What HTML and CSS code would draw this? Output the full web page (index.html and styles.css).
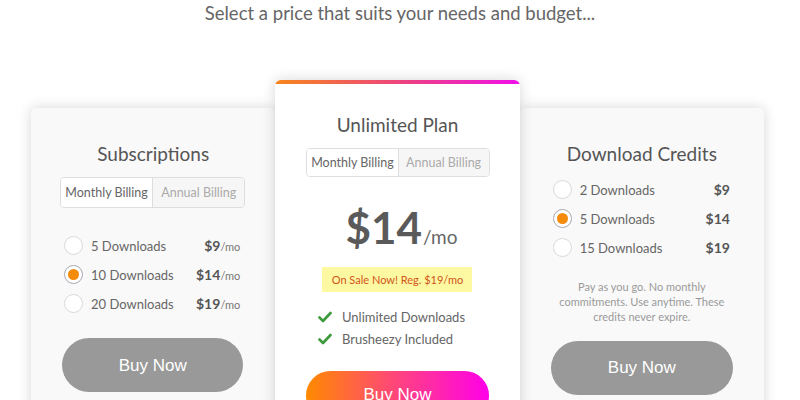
FILE: index.html
```html
<!DOCTYPE html>
<html>
<head>
<meta charset="utf-8">
<link rel="stylesheet" href="styles.css">
</head>
<body>
<h1 class="headline">Select a price that suits your needs and budget...</h1>
<div class="plans">
  <section class="card side">
    <h2 class="card-title">Subscriptions</h2>
    <div class="toggle">
      <span class="seg active">Monthly Billing</span>
      <span class="seg">Annual Billing</span>
    </div>
    <ul class="options sub-options">
      <li class="option"><span class="radio"></span><span class="opt-label">5 Downloads</span><span class="opt-price">$9<small>/mo</small></span></li>
      <li class="option"><span class="radio checked"></span><span class="opt-label">10 Downloads</span><span class="opt-price">$14<small>/mo</small></span></li>
      <li class="option"><span class="radio"></span><span class="opt-label">20 Downloads</span><span class="opt-price">$19<small>/mo</small></span></li>
    </ul>
    <button class="buy grey sub-buy">Buy Now</button>
  </section>
  <section class="card featured">
    <div class="bar"></div>
    <h2 class="card-title">Unlimited Plan</h2>
    <div class="toggle">
      <span class="seg active">Monthly Billing</span>
      <span class="seg">Annual Billing</span>
    </div>
    <div class="big-price">$14<span class="per">/mo</span></div>
    <div class="sale">On Sale Now! Reg. $19/mo</div>
    <ul class="features">
      <li><svg class="check" viewBox="0 0 14 12" width="14" height="12"><path d="M1.5 6.5 L5 10 L12.5 2" fill="none" stroke="#3d9b3d" stroke-width="2.6" stroke-linecap="round" stroke-linejoin="round"/></svg>Unlimited Downloads</li>
      <li><svg class="check" viewBox="0 0 14 12" width="14" height="12"><path d="M1.5 6.5 L5 10 L12.5 2" fill="none" stroke="#3d9b3d" stroke-width="2.6" stroke-linecap="round" stroke-linejoin="round"/></svg>Brusheezy Included</li>
    </ul>
    <button class="buy gradient">Buy Now</button>
  </section>
  <section class="card side">
    <h2 class="card-title">Download Credits</h2>
    <ul class="options credit-options">
      <li class="option"><span class="radio"></span><span class="opt-label">2 Downloads</span><span class="opt-price">$9</span></li>
      <li class="option"><span class="radio checked"></span><span class="opt-label">5 Downloads</span><span class="opt-price">$14</span></li>
      <li class="option"><span class="radio"></span><span class="opt-label">15 Downloads</span><span class="opt-price">$19</span></li>
    </ul>
    <p class="note">Pay as you go. No monthly commitments. Use anytime. These credits never expire.</p>
    <button class="buy grey credit-buy">Buy Now</button>
  </section>
</div>
</body>
</html>
```
FILE: styles.css
```css
* { box-sizing: border-box; }
html, body { margin: 0; padding: 0; background: #fff; }
body {
  font-family: Lato, "Noto Sans", sans-serif;
  color: #666;
  width: 800px;
  height: 400px;
  overflow: hidden;
}
.headline {
  margin: 0;
  padding-top: 1px;
  text-align: center;
  font-size: 18.5px;
  line-height: 24px;
  font-weight: 400;
  color: #666;
}
.plans {
  display: flex;
  align-items: flex-start;
  width: 733px;
  margin: 55px 0 0 31px;
}
.card {
  width: 245px;
  display: flex;
  flex-direction: column;
  align-items: stretch;
}
.side {
  margin-top: 28px;
  background: #faf9f9;
  border-radius: 5px;
  box-shadow: 0 0 14px rgba(0,0,0,0.16);
  padding: 34px 0 0;
  height: 320px;
}
.featured {
  position: relative;
  z-index: 2;
  background: #fff;
  border-radius: 6px 6px 0 0;
  box-shadow: 0 0 14px rgba(0,0,0,0.16);
  height: 340px;
  overflow: hidden;
}
.bar {
  height: 5px;
  background: linear-gradient(90deg, #f7861c, #ec3f86 55%, #f010e8);
}
.card-title {
  margin: 0;
  text-align: center;
  font-size: 19px;
  line-height: 24px;
  font-weight: 400;
  color: #555;
}
.featured .card-title { margin-top: 29px; }
.toggle {
  display: flex;
  margin: 11px 30px 0 29px;
  height: 31px;
  border: 1px solid #dedede;
  border-radius: 4px;
  overflow: hidden;
  font-size: 12.5px;
}
.featured .toggle { margin: 11px 30px 0 31px; height: 32px; }
.seg {
  flex: 1;
  display: flex;
  align-items: center;
  justify-content: center;
  background: #f7f6f6;
  color: #aaa;
}
.seg.active {
  background: #fff;
  color: #666;
  border-right: 1px solid #dedede;
}
.options {
  list-style: none;
  margin: 0;
  padding: 0 35px 0 33px;
}
.sub-options { margin-top: 23px; }
.credit-options { margin-top: 9px; padding-right: 34px; }
.option {
  display: flex;
  align-items: center;
  height: 29px;
  font-size: 13px;
}
.radio {
  width: 19px;
  height: 19px;
  border-radius: 50%;
  border: 1px solid #d9d9d9;
  background: #fff;
  margin-right: 8px;
  flex: none;
  display: flex;
  align-items: center;
  justify-content: center;
}
.radio.checked { border-color: #a6a8b4; }
.radio.checked::after {
  content: "";
  width: 11px;
  height: 11px;
  border-radius: 50%;
  background: #f58b0c;
}
.opt-label { flex: 1; color: #666; }
.opt-price {
  font-weight: 700;
  font-size: 14px;
  color: #555;
}
.opt-price small {
  font-size: 11px;
  font-weight: 400;
  color: #777;
}
.buy {
  display: block;
  height: 54px;
  border: none;
  border-radius: 27px;
  color: #fff;
  font-family: "Liberation Sans", Arial, sans-serif;
  font-size: 17px;
  padding: 0;
  cursor: pointer;
}
.grey { background: #999; }
.sub-buy { margin: 20px 32px 0 31px; padding-top: 2px; }
.credit-buy { margin: 17px 31px 0 31px; }
.gradient {
  margin: 21px 31px 0 31px;
  background: linear-gradient(90deg, #ff8a00, #ff3d8a 55%, #ff00e8);
  padding-bottom: 2px;
}
.big-price {
  margin-top: 28px;
  text-align: center;
  font-size: 44px;
  line-height: 44px;
  font-weight: 700;
  color: #5a5a5a;
  padding-left: 8px;
}
.per {
  font-size: 19px;
  font-weight: 400;
  color: #666;
  margin-left: 1px;
}
.sale {
  align-self: center;
  margin-top: 8px;
  width: 150px;
  height: 25px;
  line-height: 25px;
  text-align: center;
  background: #fdf8a2;
  color: #d2551a;
  font-size: 11px;
}
.features {
  list-style: none;
  margin: 14px 0 0;
  padding: 0;
  align-self: center;
  font-size: 13px;
  color: #666;
  margin-left: -12px;
}
.features li {
  display: flex;
  align-items: center;
  height: 22px;
}
.check { margin-right: 10px; }
.note {
  margin: 17px 30px 0;
  text-align: center;
  font-size: 11px;
  line-height: 15px;
  color: #999;
}
```
